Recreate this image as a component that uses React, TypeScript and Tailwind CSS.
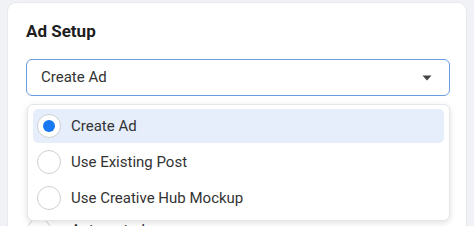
import { useState } from 'react'

const options = ['Create Ad', 'Use Existing Post', 'Use Creative Hub Mockup']

const Radio = ({ checked }: { checked: boolean }) => (
  <span className="grid h-[24px] w-[24px] shrink-0 place-items-center rounded-full border border-[#ccd0d5] bg-white">
    {checked && <span className="h-[12px] w-[12px] rounded-full bg-[#1877f2]" />}
  </span>
)

export default function App() {
  const [selected] = useState(0)

  return (
    <div
      className="h-[226px] w-[474px] overflow-hidden bg-[#f0f2f5] px-[8px] pt-[3px]"
      style={{ fontFamily: 'Roboto, "Liberation Sans", sans-serif' }}
    >
      <div className="h-[240px] rounded-[8px] bg-white px-[18px] pt-[17px] shadow-[0_0_2px_rgba(0,0,0,0.12)]">
        <h2 className="text-[17px] leading-[22px] font-bold text-[#1c1e21]">Ad Setup</h2>

        <div className="relative mt-[17px]">
          <button className="flex h-[37px] w-[424px] items-center justify-between rounded-[6px] border border-[#6b9be0] bg-white pr-[17px] pl-[14px] text-[15px] text-[#333]">
            <span>Create Ad</span>
            <svg width="10" height="6" viewBox="0 0 10 6">
              <path d="M0.5 0.5h9L5 5.5z" fill="#444" />
            </svg>
          </button>

          {/* format options sitting under the open menu */}
          <div className="mt-[71px] flex flex-col gap-[27px] pl-[1px]">
            <div className="flex items-center gap-[20px] text-[15px] text-[#333]">
              <Radio checked={false} />
              <span>Single image or video</span>
            </div>
            <div className="flex items-center gap-[20px] text-[15px] text-[#333]">
              <Radio checked={false} />
              <span>Automated</span>
            </div>
          </div>

          <div className="absolute top-[45px] left-[1px] w-[423px] rounded-[6px] border border-[#e4e6eb] bg-white px-[5px] pt-[4px] pb-[5px] shadow-[0_2px_6px_rgba(0,0,0,0.12)]">
            {options.map((label, i) => (
              <div
                key={label}
                className={`flex h-[34px] items-center gap-[10px] rounded-[5px] pl-[4px] text-[15px] text-[#333] ${
                  i === selected ? 'bg-[#e6eefb]' : ''
                } ${i > 0 ? 'mt-[2px]' : ''}`}
              >
                <Radio checked={i === selected} />
                <span>{label}</span>
              </div>
            ))}
          </div>
        </div>
      </div>
    </div>
  )
}
